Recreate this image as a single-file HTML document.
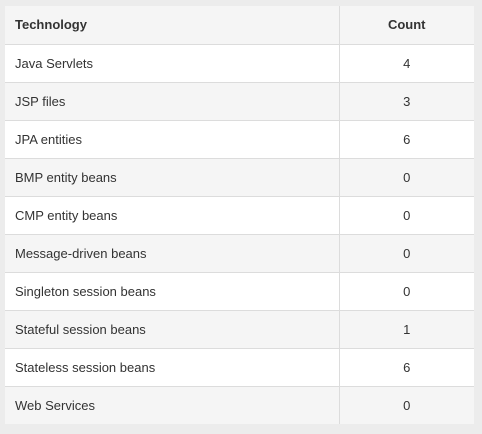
<!DOCTYPE html>
<html><head><style>
html,body{margin:0;padding:0;background:#ececec;width:482px;height:434px;overflow:hidden}
table{position:absolute;left:5px;top:6px;width:469px;border-collapse:collapse;font-family:"Liberation Sans",Arial,sans-serif;font-size:13px;color:#333}
td,th{height:37px;padding:0 10px;border-top:1px solid #dcdcdc;border-left:1px solid #dcdcdc;box-sizing:border-box}
tr td:first-child,tr th:first-child{border-left:none}
tr:first-child th{border-top:none;height:38px}
th{background:#f5f5f5;text-align:left;font-weight:bold}
th.c,td.c{text-align:center;width:135px}
tr:nth-child(even) td{background:#fff}
tr:nth-child(odd) td{background:#f5f5f5}
td{height:38px}
</style></head><body>
<table>
<tr><th>Technology</th><th class="c">Count</th></tr>
<tr><td>Java Servlets</td><td class="c">4</td></tr>
<tr><td>JSP files</td><td class="c">3</td></tr>
<tr><td>JPA entities</td><td class="c">6</td></tr>
<tr><td>BMP entity beans</td><td class="c">0</td></tr>
<tr><td>CMP entity beans</td><td class="c">0</td></tr>
<tr><td>Message-driven beans</td><td class="c">0</td></tr>
<tr><td>Singleton session beans</td><td class="c">0</td></tr>
<tr><td>Stateful session beans</td><td class="c">1</td></tr>
<tr><td>Stateless session beans</td><td class="c">6</td></tr>
<tr><td>Web Services</td><td class="c">0</td></tr>
</table>
</body></html>
